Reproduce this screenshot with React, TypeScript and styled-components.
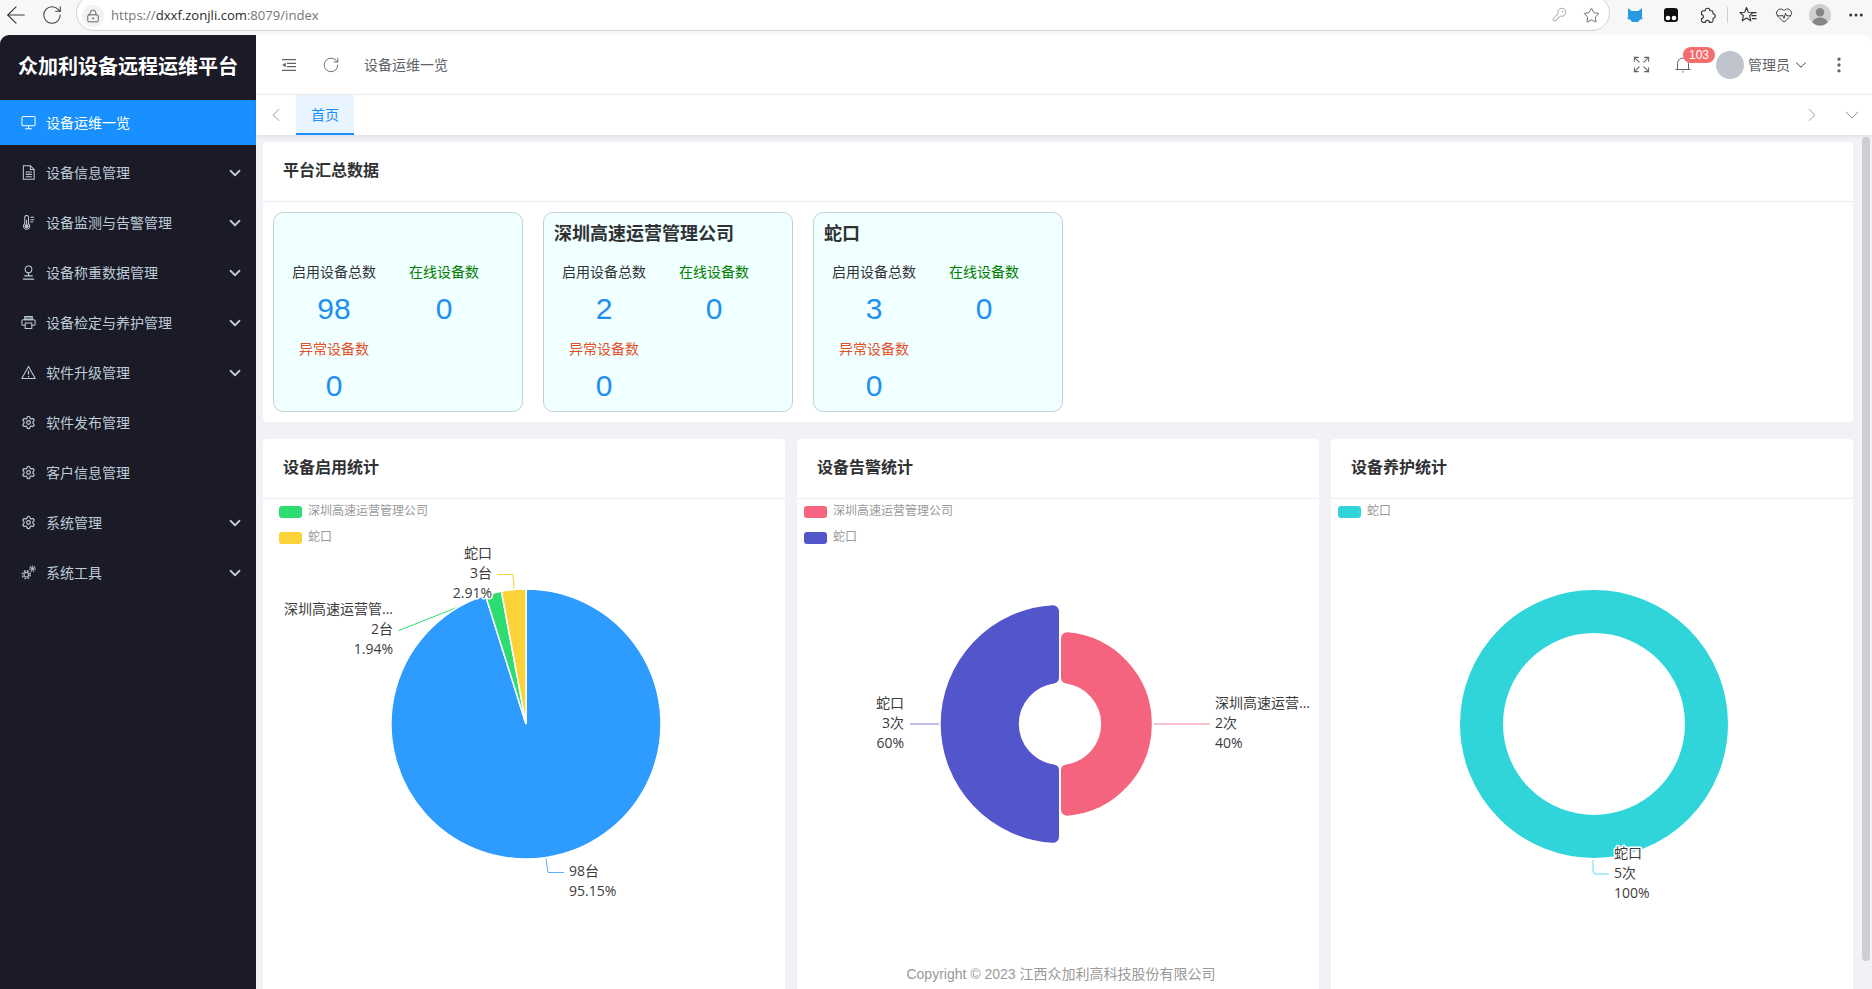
import React from "react";
import styled, { createGlobalStyle } from "styled-components";
import {
  ArrowLeft,
  RotateCw,
  LockKeyhole,
  KeyRound,
  Star,
  HeartPulse,
  Ellipsis,
  EllipsisVertical,
  Expand,
  ChevronDown,
  ChevronLeft,
  ChevronRight,
  Settings,
} from "lucide-react";

const UI_FONT = `"Liberation Sans", "Noto Sans CJK SC", sans-serif`;
const CHART_FONT = `"Open Sans", "Noto Sans CJK SC", sans-serif`;

const GlobalStyle = createGlobalStyle`
  html, body, #root { margin: 0; padding: 0; height: 100%; }
  body { font-family: ${UI_FONT}; background: #f7f7f7; overflow: hidden; }
  * { box-sizing: border-box; }
`;

const Page = styled.div`
  height: 100vh;
  display: flex;
  flex-direction: column;
  overflow: hidden;
  background: #f7f7f7;
`;

/* ---------- browser chrome ---------- */
const BrowserBar = styled.div`
  height: 35px;
  flex: none;
  display: flex;
  align-items: flex-start;
  color: #333;
`;
const NavGroup = styled.div`
  display: flex;
  gap: 4px;
  height: 30px;
  align-items: center;
`;
const BarButton = styled.span`
  width: 32px;
  height: 30px;
  display: flex;
  align-items: center;
  justify-content: center;
  color: #3a3a3a;
`;
const AddressPill = styled.div`
  flex: 1;
  min-width: 0;
  height: 36px;
  margin: -5px 0 0 8px;
  padding: 5px 8px 0 5px;
  background: #fff;
  border: 1px solid #d2d2d2;
  border-radius: 18px;
  display: flex;
  align-items: center;
`;
const LockBadge = styled.span`
  width: 22px;
  height: 22px;
  border-radius: 50%;
  background: #f2f2f2;
  color: #555;
  display: flex;
  align-items: center;
  justify-content: center;
  margin-right: 7px;
`;
const UrlText = styled.span`
  font-family: "Open Sans", sans-serif;
  font-size: 13.1px;
  padding-bottom: 1px;
  color: #777;
  white-space: nowrap;
`;
const UrlHost = styled.span`
  color: #2b2b2b;
`;
const PillActions = styled.div`
  margin-left: auto;
  display: flex;
  gap: 12px;
`;
const PillAction = styled.span<{ $color: string }>`
  width: 20px;
  display: flex;
  justify-content: center;
  color: ${(p) => p.$color};
`;
const Tools = styled.div`
  display: flex;
  align-items: center;
  height: 30px;
  margin: 0 -2px 0 7px;
  flex: none;
`;
const ToolButton = styled.span`
  width: 36px;
  height: 30px;
  display: flex;
  align-items: center;
  justify-content: center;
  color: #333;
`;
const ToolDivider = styled.span`
  width: 5px;
  height: 16px;
  display: flex;
  justify-content: center;
  &::before {
    content: "";
    width: 1px;
    background: #cfcfcf;
  }
`;

/* ---------- shell ---------- */
const Shell = styled.div`
  flex: 1;
  min-height: 0;
  display: flex;
  background: #fff;
  border-radius: 9px 9px 0 0;
  overflow: hidden;
`;
const Sidebar = styled.aside`
  width: 256px;
  flex: none;
  background: #1a1b26;
`;
const Brand = styled.div`
  height: 65px;
  padding: 0 0 4px 18px;
  display: flex;
  align-items: center;
  color: #fff;
  font-size: 20px;
  font-weight: 700;
  white-space: nowrap;
`;
const Menu = styled.nav`
  display: flex;
  flex-direction: column;
  gap: 5px;
`;
const MenuItem = styled.div<{ $active?: boolean }>`
  height: 45px;
  display: flex;
  align-items: center;
  padding: 0 12px 0 21px;
  font-size: 14px;
  color: ${(p) => (p.$active ? "#fff" : "#bfcbd9")};
  background: ${(p) => (p.$active ? "#1890ff" : "transparent")};
`;
const MenuIcon = styled.span`
  width: 15px;
  height: 15px;
  margin-right: 10px;
  display: flex;
  align-items: center;
  justify-content: center;
  flex: none;
`;
const MenuLabel = styled.span`
  flex: 1;
  padding-bottom: 2px;
`;

const Main = styled.main`
  flex: 1;
  min-width: 0;
  display: flex;
  flex-direction: column;
  position: relative;
`;
const Header = styled.header`
  height: 60px;
  flex: none;
  padding: 0 23px 0 26px;
  display: flex;
  align-items: center;
  border-bottom: 1px solid #f2f2f2;
  color: #606266;
`;
const RefreshSlot = styled.span`
  display: flex;
  margin: 0 24px 0 26px;
`;
const Crumb = styled.span`
  font-size: 14px;
  padding-bottom: 2px;
  color: #606266;
`;
const HeaderRight = styled.div`
  margin-left: auto;
  display: flex;
  align-items: center;
`;
const BellWrap = styled.span`
  position: relative;
  display: flex;
  margin: 0 25px 0 24px;
`;
const Badge = styled.span`
  position: absolute;
  left: 8px;
  top: -9px;
  width: 32px;
  height: 16px;
  border-radius: 8px;
  background: #f56c6c;
  color: #fff;
  font-size: 12px;
  line-height: 16px;
  text-align: center;
`;
const Avatar = styled.span`
  width: 28px;
  height: 28px;
  border-radius: 50%;
  background: #c0c4cc;
  margin-right: 4px;
`;
const UserName = styled.span`
  font-size: 14px;
  padding-bottom: 2px;
  color: #606266;
`;
const UserCaret = styled.span`
  display: flex;
  margin: 0 19px 0 2px;
`;

const TabBar = styled.div`
  height: 40px;
  flex: none;
  display: flex;
  align-items: stretch;
  background: #fff;
  box-shadow: 0 1px 4px rgba(0, 21, 41, 0.1);
  position: relative;
  z-index: 1;
  color: #8d9095;
`;
const TabArrow = styled.span`
  width: 40px;
  display: flex;
  align-items: center;
  justify-content: center;
`;
const Tab = styled.span`
  width: 58px;
  display: flex;
  align-items: center;
  justify-content: center;
  font-size: 14px;
  color: #1890ff;
  background: #e8f4ff;
  border-bottom: 2px solid #1890ff;
`;
const TabSpacer = styled.span`
  flex: 1;
`;

const Body = styled.div`
  flex: 1;
  min-height: 0;
  display: flex;
  background: #f0f2f5;
`;
const Content = styled.div`
  flex: 1;
  min-width: 0;
  padding: 7px 9px 0 7px;
  overflow: hidden;
  display: flex;
  flex-direction: column;
  gap: 17px;
`;
const ScrollRail = styled.div`
  width: 10px;
  flex: none;
  padding: 2px 2px 28px 0;
`;
const ScrollThumb = styled.div`
  height: 100%;
  border-radius: 4px;
  background: #cdced2;
`;

const Card = styled.section`
  background: #fff;
  border-radius: 4px;
  flex: none;
`;
const CardHeader = styled.h2`
  margin: 0;
  height: 60px;
  padding: 0 0 5px 20px;
  display: flex;
  align-items: center;
  border-bottom: 1px solid #ebeef5;
  font-size: 16px;
  font-weight: 700;
  color: #303133;
`;
const TileRow = styled.div`
  display: flex;
  gap: 20px;
  padding: 10px;
`;
const Tile = styled.div`
  width: 250px;
  height: 200px;
  padding: 9px 9px 0 18px;
  border: 1px solid #c3d0d2;
  border-radius: 10px;
  background: #f0ffff;
`;
const TileTitle = styled.div`
  height: 24px;
  margin-left: -8px;
  font-size: 18px;
  line-height: 24px;
  font-weight: 700;
  color: #303133;
  white-space: nowrap;
`;
const MetricGrid = styled.div`
  display: grid;
  grid-template-columns: 84px 70px;
  column-gap: 33px;
  row-gap: 13px;
  padding-top: 16px;
`;
const Metric = styled.div`
  display: flex;
  flex-direction: column;
  align-items: center;
  gap: 10px;
`;
const MetricLabel = styled.span<{ $color: string }>`
  font-size: 14px;
  line-height: 20px;
  white-space: nowrap;
  color: ${(p) => p.$color};
`;
const MetricValue = styled.span`
  font-size: 30px;
  line-height: 34px;
  color: #1e8ff0;
`;

const ChartRow = styled.div`
  display: grid;
  grid-template-columns: repeat(3, 522px);
  gap: 12px;
  flex: 1;
  min-height: 0;
`;
const ChartCard = styled(Card)`
  height: 560px;
`;
const ChartBody = styled.div`
  position: relative;
  height: 490px;
`;
const ChartSvg = styled.svg`
  display: block;
`;
const LegendList = styled.ul<{ $left: number }>`
  position: absolute;
  top: 7px;
  left: ${(p) => p.$left}px;
  margin: 0;
  padding: 0;
  list-style: none;
  display: flex;
  flex-direction: column;
  gap: 14px;
`;
const LegendEntry = styled.li`
  display: flex;
  align-items: center;
  gap: 6px;
  height: 12px;
  font-family: ${CHART_FONT};
  font-size: 12px;
  line-height: 12px;
  color: #999;
`;
const LegendSwatch = styled.span<{ $color: string }>`
  width: 23px;
  height: 12px;
  border-radius: 3px;
  background: ${(p) => p.$color};
  flex: none;
`;
const LegendName = styled.span`
  position: relative;
  top: -1px;
  white-space: nowrap;
`;
const SliceLabel = styled.text`
  font-family: ${CHART_FONT};
  font-size: 14px;
  fill: #3c3c3c;
  dominant-baseline: central;
  paint-order: stroke;
  stroke: #fff;
  stroke-width: 3px;
  stroke-linejoin: round;
`;
const Footer = styled.div`
  position: absolute;
  left: 4px;
  right: 10px;
  bottom: 6px;
  line-height: 18px;
  text-align: center;
  font-size: 14px;
  color: #999;
`;

/* ---------- icons ---------- */
const Line = (props: React.SVGProps<SVGSVGElement> & { size?: number }) => {
  const { size = 15, children, ...rest } = props;
  return (
    <svg
      width={size}
      height={size}
      viewBox="0 0 16 16"
      fill="none"
      stroke="currentColor"
      strokeWidth={1.1}
      {...rest}
    >
      {children}
    </svg>
  );
};
const MonitorIcon = () => (
  <Line>
    <rect x="1" y="1.5" width="14" height="10" rx="1.5" />
    <path d="M8 11.5V14.5M4.5 14.7H11.5" />
  </Line>
);
const FileIcon = () => (
  <Line>
    <path d="M2.5 0.8H10L14 4.8V15.2H2.5Z" />
    <path d="M10 0.8V4.8H14M5 7.5H11.5M5 10H11.5M5 12.5H11.5" />
  </Line>
);
const ThermoIcon = () => (
  <Line>
    <path d="M4 9.3V2.5a2 2 0 0 1 4 0V9.3a3.3 3.3 0 1 1-4 0Z" />
    <circle cx="6" cy="12" r="1.6" fill="currentColor" />
    <path d="M6 5V11M10 2.5H14M10 5H14M10 7.5H13" />
  </Line>
);
const StampIcon = () => (
  <Line>
    <circle cx="8" cy="4.6" r="3.6" />
    <path d="M8 8.2V11.5M3.5 11.5H12.5M2 15H14" strokeWidth={1.3} />
  </Line>
);
const PrinterIcon = () => (
  <Line>
    <path d="M4.5 11H2.2A1.2 1.2 0 0 1 1 9.8V6.2A1.2 1.2 0 0 1 2.2 5H13.8A1.2 1.2 0 0 1 15 6.2V9.8A1.2 1.2 0 0 1 13.8 11H11.5" />
    <path d="M4 5V1.5H12V5Z" fill="currentColor" fillOpacity={0.55} />
    <path d="M4.5 8.5H11.5V14.5H4.5Z" />
  </Line>
);
const WarnIcon = () => (
  <Line>
    <path d="M8 1.5L15.2 14.5H0.8Z" strokeLinejoin="round" />
    <path d="M8 6V10.5M8 11.6V13" strokeWidth={1.3} />
  </Line>
);
const CogsIcon = () => (
  <svg width="17" height="17" viewBox="0 0 17 17" fill="none" stroke="#b4bcc6">
    <circle cx="6" cy="11" r="2.6" strokeWidth="1.3" />
    <circle cx="6" cy="11" r="4.4" strokeWidth="1.8" strokeDasharray="1.9 1.6" />
    <circle cx="13" cy="4.2" r="1.5" strokeWidth="1.1" fill="#b4bcc6" />
    <circle cx="13" cy="4.2" r="3" strokeWidth="1.4" strokeDasharray="1.5 1.1" />
  </svg>
);
const FoldIcon = () => (
  <svg width="14" height="12" viewBox="0 0 14 12" fill="none" stroke="#606266" strokeWidth="1.2">
    <path d="M0 0.6H14M5 4.4H14M5 7.6H14M0 11.4H14" />
    <path d="M0.5 6L3.6 4V8Z" fill="#606266" strokeWidth="0.4" />
  </svg>
);
const BellIcon = () => (
  <svg width="16" height="17" viewBox="0 0 16 17" fill="none" stroke="#606266" strokeWidth="1">
    <path d="M2.5 13.5V7.5a5.5 5.5 0 0 1 11 0V13.5" />
    <path d="M0.5 13.5H15.5" />
    <path d="M8 15.2V16.6" strokeWidth="1.3" />
  </svg>
);
const CatLogo = () => (
  <svg width="16" height="16" viewBox="0 0 16 16">
    <path d="M1 1L4.6 4H11.4L15 1V10.5L16 12L13 12.5L11 15H5L3 12.5L0 12L1 10.5Z" fill="#2a9ae0" />
  </svg>
);
const MaskLogo = () => (
  <svg width="16" height="16" viewBox="0 0 16 16">
    <rect x="1" y="1" width="14" height="14" rx="3" fill="#111" />
    <circle cx="5" cy="11" r="2.3" fill="#fff" />
    <circle cx="11" cy="11" r="2.3" fill="#fff" />
  </svg>
);
const PuzzleIcon = () => (
  <svg width="17" height="17" viewBox="0 0 17 17" fill="none" stroke="#333" strokeWidth="1.1" strokeLinejoin="round">
    <path d="M2.5 5.5C2.5 4.4 3.4 3.8 4.5 3.8H6.2C6.2 2.4 7.2 1.2 8.6 1.2S11 2.4 11 3.8H12.4C13.4 3.8 14 4.5 14 5.5V6.8C15.3 6.8 16.2 7.7 16.2 9S15.3 11.2 14 11.2V13.6C14 14.6 13.3 15.4 12.2 15.4H10.4C10.4 14.2 9.5 13.4 8.4 13.4S6.3 14.2 6.3 15.4H4.3C3.2 15.4 2.5 14.6 2.5 13.6V11.5C3.5 11.5 4.4 10.6 4.4 9.5S3.5 7.6 2.5 7.6Z" />
  </svg>
);
const FavsIcon = () => (
  <svg width="18" height="18" viewBox="0 0 18 18" fill="none" stroke="#333" strokeWidth="1.1">
    <path d="M7.5 1.5L9.3 6.3L14 6.5L10.6 9.6L11.8 14.8L7.5 12L3.2 14.8L4.4 9.6L1 6.5L5.7 6.3Z" strokeLinejoin="round" />
    <path d="M13 6.6H17.5M12.5 9.6H17.5M13 12.6H17.5" />
  </svg>
);
const ProfileAvatar = () => (
  <svg width="22" height="22" viewBox="0 0 22 22">
    <circle cx="11" cy="11" r="11" fill="#cfcfcf" />
    <circle cx="11" cy="8.2" r="4.2" fill="#858585" />
    <path d="M3.5 18.5C4.5 14.5 8 13.5 11 13.5S17.5 14.5 18.5 18.5A11 11 0 0 1 3.5 18.5Z" fill="#858585" />
  </svg>
);

/* ---------- data ---------- */
const Gear = () => <Settings size={17} strokeWidth={1.9} />;
const MENU: { label: string; icon: React.ReactNode; caret?: boolean; active?: boolean }[] = [
  { label: "设备运维一览", icon: <MonitorIcon />, active: true },
  { label: "设备信息管理", icon: <FileIcon />, caret: true },
  { label: "设备监测与告警管理", icon: <ThermoIcon />, caret: true },
  { label: "设备称重数据管理", icon: <StampIcon />, caret: true },
  { label: "设备检定与养护管理", icon: <PrinterIcon />, caret: true },
  { label: "软件升级管理", icon: <WarnIcon />, caret: true },
  { label: "软件发布管理", icon: <Gear /> },
  { label: "客户信息管理", icon: <Gear /> },
  { label: "系统管理", icon: <Gear />, caret: true },
  { label: "系统工具", icon: <CogsIcon />, caret: true },
];

const TILES = [
  { title: "", total: 98 },
  { title: "深圳高速运营管理公司", total: 2 },
  { title: "蛇口", total: 3 },
];

const BLUE = "#2e9cff";
const GREEN = "#2edd72";
const YELLOW = "#fbd237";
const PINK = "#f4647e";
const PURPLE = "#5355cb";
const CYAN = "#30d5da";

const polar = (cx: number, cy: number, r: number, deg: number) => {
  const a = (deg * Math.PI) / 180;
  return `${cx + r * Math.sin(a)} ${cy - r * Math.cos(a)}`;
};
const wedge = (cx: number, cy: number, r: number, a0: number, a1: number) =>
  `M${cx} ${cy}L${polar(cx, cy, r, a0)}A${r} ${r} 0 ${a1 - a0 > 180 ? 1 : 0} 1 ${polar(cx, cy, r, a1)}Z`;

const Label = ({
  x,
  y,
  lines,
  anchor = "start",
}: {
  x: number;
  y: number;
  lines: string[];
  anchor?: "start" | "end";
}) => (
  <>
    {lines.map((t, i) => (
      <SliceLabel key={t} x={x} y={y + i * 20} textAnchor={anchor}>
        {t}
      </SliceLabel>
    ))}
  </>
);

const Legend = ({ left, items }: { left: number; items: [string, string][] }) => (
  <LegendList $left={left}>
    {items.map(([name, color]) => (
      <LegendEntry key={name}>
        <LegendSwatch $color={color} />
        <LegendName>{name}</LegendName>
      </LegendEntry>
    ))}
  </LegendList>
);

const Chart = ({ x, children }: { x: number; children: React.ReactNode }) => (
  <ChartSvg width={522} height={490} viewBox={`${x} 499 522 490`}>
    {children}
  </ChartSvg>
);

const EnableChart = () => {
  const cx = 526;
  const cy = 724;
  const r = 135;
  const a = (98 / 103) * 360;
  const b = (100 / 103) * 360;
  return (
    <Chart x={263}>
      <path d="M398.4 630.7L476 600" stroke={GREEN} fill="none" />
      <path d="M497 574.5H513L514 589" stroke={YELLOW} fill="none" />
      <path d="M546 858.5L548 872.5H564" stroke={BLUE} fill="none" strokeOpacity={0.8} />
      <path d={wedge(cx, cy, r, 0, a)} fill={BLUE} stroke="#fff" strokeWidth={1.5} />
      <path d={wedge(cx, cy, r, a, b)} fill={GREEN} stroke="#fff" strokeWidth={1.5} />
      <path d={wedge(cx, cy, r, b, 360)} fill={YELLOW} stroke="#fff" strokeWidth={1.5} />
      <Label x={492} y={552} anchor="end" lines={["蛇口", "3台", "2.91%"]} />
      <Label x={393} y={608} anchor="end" lines={["深圳高速运营管...", "2台", "1.94%"]} />
      <Label x={569} y={870} lines={["98台", "95.15%"]} />
    </Chart>
  );
};

const AlarmChart = () => (
  <Chart x={797}>
    <path d="M910 724H939" stroke={PURPLE} strokeOpacity={0.5} strokeWidth={1.5} />
    <path d="M1154 724H1210" stroke={PINK} strokeOpacity={0.5} strokeWidth={1.5} />
    <path
      d="M1053 611.2A113 113 0 0 0 1053 836.8V770.5A47 47 0 0 1 1053 677.5Z"
      fill={PURPLE}
      stroke={PURPLE}
      strokeWidth={12}
      strokeLinejoin="round"
    />
    <path
      d="M1067 638.3A86 86 0 0 1 1067 809.7V770.5A47 47 0 0 0 1067 677.5Z"
      fill={PINK}
      stroke={PINK}
      strokeWidth={12}
      strokeLinejoin="round"
    />
    <Label x={904} y={702} anchor="end" lines={["蛇口", "3次", "60%"]} />
    <Label x={1215} y={702} lines={["深圳高速运营...", "2次", "40%"]} />
  </Chart>
);

const CareChart = () => (
  <Chart x={1331}>
    <circle cx={1594} cy={724} r={112.5} fill="none" stroke={CYAN} strokeWidth={43} />
    <path d="M1593 860V870Q1593 874 1597 874H1609" stroke={CYAN} strokeOpacity={0.5} strokeWidth={1.5} fill="none" />
    <Label x={1614} y={852} lines={["蛇口", "5次", "100%"]} />
  </Chart>
);

const METRIC_COLORS = { total: "#333", online: "#008000", bad: "#e2512a" };

export default function App() {
  return (
    <Page>
      <GlobalStyle />
      <BrowserBar>
        <NavGroup>
          <BarButton>
            <ArrowLeft size={28} strokeWidth={1} />
          </BarButton>
          <BarButton>
            <RotateCw size={22} strokeWidth={1.1} />
          </BarButton>
        </NavGroup>
        <AddressPill>
          <LockBadge>
            <LockKeyhole size={14} strokeWidth={1.5} />
          </LockBadge>
          <UrlText>
            https://<UrlHost>dxxf.zonjli.com</UrlHost>:8079/index
          </UrlText>
          <PillActions>
            <PillAction $color="#8a8a8a">
              <KeyRound size={15} strokeWidth={1.2} />
            </PillAction>
            <PillAction $color="#555">
              <Star size={17} strokeWidth={1.2} />
            </PillAction>
          </PillActions>
        </AddressPill>
        <Tools>
          <ToolButton>
            <CatLogo />
          </ToolButton>
          <ToolButton>
            <MaskLogo />
          </ToolButton>
          <ToolButton>
            <PuzzleIcon />
          </ToolButton>
          <ToolDivider />
          <ToolButton>
            <FavsIcon />
          </ToolButton>
          <ToolButton>
            <HeartPulse size={18} strokeWidth={1.2} />
          </ToolButton>
          <ToolButton>
            <ProfileAvatar />
          </ToolButton>
          <ToolButton>
            <Ellipsis size={18} strokeWidth={2} />
          </ToolButton>
        </Tools>
      </BrowserBar>

      <Shell>
        <Sidebar>
          <Brand>众加利设备远程运维平台</Brand>
          <Menu>
            {MENU.map((m) => (
              <MenuItem key={m.label} $active={m.active}>
                <MenuIcon>{m.icon}</MenuIcon>
                <MenuLabel>{m.label}</MenuLabel>
                {m.caret && <ChevronDown size={18} strokeWidth={2.4} />}
              </MenuItem>
            ))}
          </Menu>
        </Sidebar>

        <Main>
          <Header>
            <FoldIcon />
            <RefreshSlot>
              <RotateCw size={18} strokeWidth={1.2} />
            </RefreshSlot>
            <Crumb>设备运维一览</Crumb>
            <HeaderRight>
              <Expand size={19} strokeWidth={1.3} />
              <BellWrap>
                <BellIcon />
                <Badge>103</Badge>
              </BellWrap>
              <Avatar />
              <UserName>管理员</UserName>
              <UserCaret>
                <ChevronDown size={18} strokeWidth={1.4} />
              </UserCaret>
              <EllipsisVertical size={20} strokeWidth={2} />
            </HeaderRight>
          </Header>

          <TabBar>
            <TabArrow>
              <ChevronLeft size={22} strokeWidth={1} />
            </TabArrow>
            <Tab>首页</Tab>
            <TabSpacer />
            <TabArrow>
              <ChevronRight size={22} strokeWidth={1} />
            </TabArrow>
            <TabArrow>
              <ChevronDown size={24} strokeWidth={1} />
            </TabArrow>
          </TabBar>

          <Body>
            <Content>
              <Card>
                <CardHeader>平台汇总数据</CardHeader>
                <TileRow>
                  {TILES.map((t) => (
                    <Tile key={t.total}>
                      <TileTitle>{t.title}</TileTitle>
                      <MetricGrid>
                        <Metric>
                          <MetricLabel $color={METRIC_COLORS.total}>启用设备总数</MetricLabel>
                          <MetricValue>{t.total}</MetricValue>
                        </Metric>
                        <Metric>
                          <MetricLabel $color={METRIC_COLORS.online}>在线设备数</MetricLabel>
                          <MetricValue>0</MetricValue>
                        </Metric>
                        <Metric>
                          <MetricLabel $color={METRIC_COLORS.bad}>异常设备数</MetricLabel>
                          <MetricValue>0</MetricValue>
                        </Metric>
                      </MetricGrid>
                    </Tile>
                  ))}
                </TileRow>
              </Card>

              <ChartRow>
                <ChartCard>
                  <CardHeader>设备启用统计</CardHeader>
                  <ChartBody>
                    <EnableChart />
                    <Legend
                      left={16}
                      items={[
                        ["深圳高速运营管理公司", GREEN],
                        ["蛇口", YELLOW],
                      ]}
                    />
                  </ChartBody>
                </ChartCard>
                <ChartCard>
                  <CardHeader>设备告警统计</CardHeader>
                  <ChartBody>
                    <AlarmChart />
                    <Legend
                      left={7}
                      items={[
                        ["深圳高速运营管理公司", PINK],
                        ["蛇口", PURPLE],
                      ]}
                    />
                  </ChartBody>
                </ChartCard>
                <ChartCard>
                  <CardHeader>设备养护统计</CardHeader>
                  <ChartBody>
                    <CareChart />
                    <Legend left={7} items={[["蛇口", CYAN]]} />
                  </ChartBody>
                </ChartCard>
              </ChartRow>
            </Content>
            <ScrollRail>
              <ScrollThumb />
            </ScrollRail>
          </Body>
          <Footer>Copyright © 2023 江西众加利高科技股份有限公司</Footer>
        </Main>
      </Shell>
    </Page>
  );
}
